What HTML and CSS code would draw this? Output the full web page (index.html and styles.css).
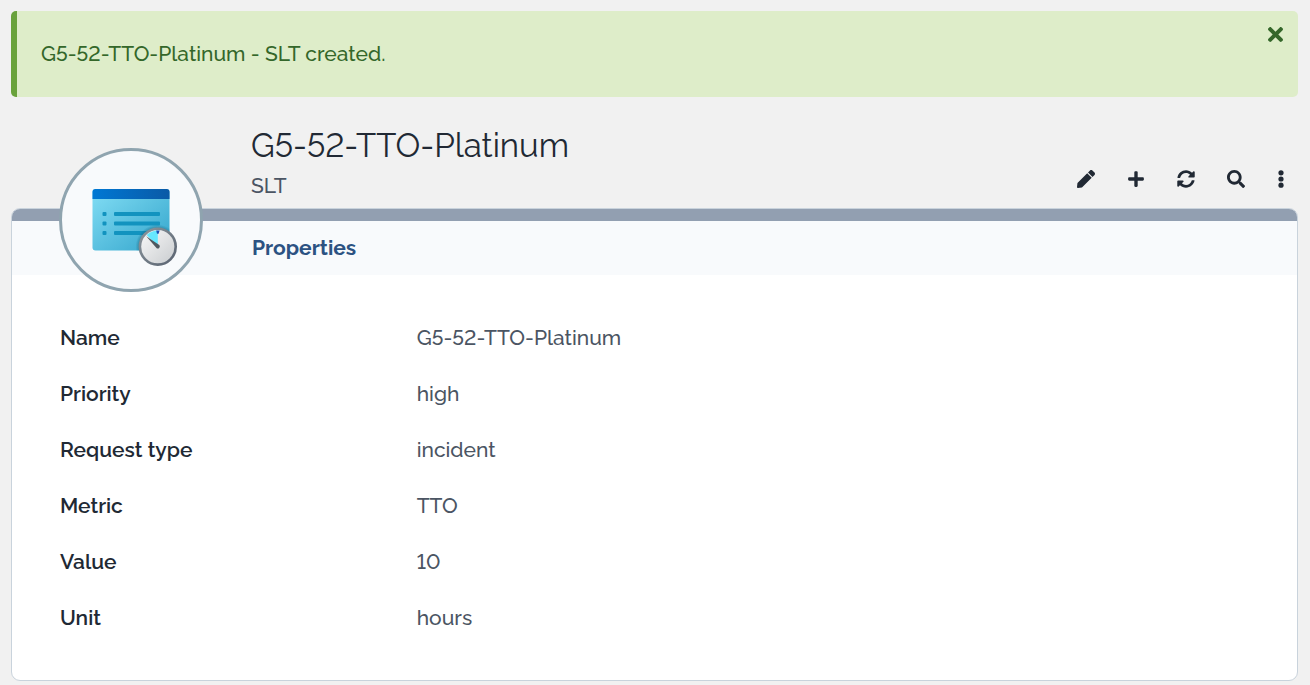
FILE: index.html
```html
<!DOCTYPE html>
<html lang="en">
<head>
<meta charset="utf-8">
<meta name="viewport" content="width=device-width, initial-scale=1">
<title>G5-52-TTO-Platinum</title>
<link rel="stylesheet" href="styles.css">
</head>
<body>
<main class="page">
  <div class="alert" role="status">
    <p class="alert-text">G5-52-TTO-Platinum - SLT created.</p>
    <button class="alert-close" type="button" aria-label="Close">
      <svg class="icon-close" viewBox="0 80 352 352"><path d="M242.72 256l100.07-100.07c12.28-12.28 12.28-32.19 0-44.48l-22.24-22.24c-12.28-12.28-32.19-12.28-44.48 0L176 189.28 75.93 89.21c-12.28-12.28-32.19-12.28-44.48 0L9.21 111.45c-12.28 12.28-12.28 32.19 0 44.48L109.28 256 9.21 356.07c-12.28 12.28-12.28 32.19 0 44.48l22.24 22.24c12.28 12.28 32.2 12.28 44.48 0L176 322.72l100.07 100.07c12.28 12.28 32.2 12.28 44.48 0l22.24-22.24c12.28-12.28 12.28-32.19 0-44.48L242.72 256z"/></svg>
    </button>
  </div>

  <section class="object">
    <header class="object-header">
      <div class="titles">
        <h1 class="title">G5-52-TTO-Platinum</h1>
        <p class="subtitle">SLT</p>
      </div>
      <div class="toolbar">
        <button class="tool" type="button" aria-label="Modify">
          <svg class="icon" viewBox="0 0 512 512"><path d="M290.74 93.24l128.02 128.02-277.99 277.99-114.14 12.6C11.35 513.54-1.56 500.62.14 485.34l12.7-114.22 277.9-277.88zm207.2-19.06l-60.11-60.11c-18.75-18.75-49.16-18.75-67.91 0l-56.55 56.55 128.02 128.02 56.55-56.55c18.75-18.76 18.75-49.16 0-67.91z"/></svg>
        </button>
        <button class="tool" type="button" aria-label="New">
          <svg class="icon" viewBox="-32 0 512 512"><path d="M416 208H272V64c0-17.67-14.33-32-32-32h-32c-17.67 0-32 14.33-32 32v144H32c-17.67 0-32 14.33-32 32v32c0 17.67 14.33 32 32 32h144v144c0 17.67 14.33 32 32 32h32c17.67 0 32-14.33 32-32V304h144c17.67 0 32-14.33 32-32v-32c0-17.67-14.33-32-32-32z"/></svg>
        </button>
        <button class="tool" type="button" aria-label="Refresh">
          <svg class="icon" viewBox="0 0 512 512"><path d="M370.72 133.28C339.458 104.008 298.888 87.962 255.848 88c-77.458.068-144.328 53.178-162.791 126.85-1.344 5.363-6.122 9.15-11.651 9.15H24.103c-7.498 0-13.194-6.807-11.807-14.176C33.933 94.924 134.813 8 256 8c66.448 0 126.791 26.136 171.315 68.685L463.03 40.97C478.149 25.851 504 36.559 504 57.941V192c0 13.255-10.745 24-24 24H345.941c-21.382 0-32.09-25.851-16.971-40.971l41.75-41.749zM32 296h134.059c21.382 0 32.09 25.851 16.971 40.971l-41.75 41.75c31.262 29.273 71.835 45.319 114.876 45.28 77.418-.07 144.315-53.144 162.787-126.849 1.344-5.363 6.122-9.15 11.651-9.15h57.304c7.498 0 13.194 6.807 11.807 14.176C478.067 417.076 377.187 504 256 504c-66.448 0-126.791-26.136-171.315-68.685L48.97 471.03C33.851 486.149 8 475.441 8 454.059V320c0-13.255 10.745-24 24-24z"/></svg>
        </button>
        <button class="tool" type="button" aria-label="Search">
          <svg class="icon" viewBox="0 0 512 512"><path d="M505 442.7L405.3 343c-4.5-4.5-10.6-7-17-7H372c27.6-35.3 44-79.7 44-128C416 93.1 322.9 0 208 0S0 93.1 0 208s93.1 208 208 208c48.3 0 92.7-16.4 128-44v16.3c0 6.4 2.5 12.5 7 17l99.7 99.7c9.4 9.4 24.6 9.4 33.9 0l28.3-28.3c9.4-9.4 9.4-24.6.1-34zM208 336c-70.7 0-128-57.2-128-128 0-70.7 57.2-128 128-128 70.7 0 128 57.2 128 128 0 70.7-57.2 128-128 128z"/></svg>
        </button>
        <button class="tool tool-menu" type="button" aria-label="Other actions">
          <svg class="icon" viewBox="0 0 18 18"><circle cx="9" cy="2.8" r="2.6"/><circle cx="9" cy="9" r="2.6"/><circle cx="9" cy="15.2" r="2.6"/></svg>
        </button>
      </div>
    </header>

    <div class="panel">
      <div class="medallion">
        <svg class="picture" viewBox="-8 -14 94 92">
          <defs>
            <linearGradient id="bar" x1="0" x2="1" y1="0" y2="0"><stop offset="0" stop-color="#0078d4"/><stop offset="1" stop-color="#0a5aa6"/></linearGradient>
            <linearGradient id="sheet" x1="0" x2="1" y1="0" y2="1"><stop offset="0" stop-color="#83def5"/><stop offset="1" stop-color="#32a4cb"/></linearGradient>
            <linearGradient id="dial" x1="0" x2="1" y1="0" y2="1"><stop offset="0" stop-color="#fafafa"/><stop offset="1" stop-color="#c8cbce"/></linearGradient>
            <linearGradient id="rim" x1="0" x2="1" y1="0" y2="1"><stop offset="0" stop-color="#8b969d"/><stop offset="1" stop-color="#596270"/></linearGradient>
            <radialGradient id="shade"><stop offset=".84" stop-color="#17647f" stop-opacity=".45"/><stop offset="1" stop-color="#17647f" stop-opacity="0"/></radialGradient>
            <clipPath id="page-clip"><rect x="0.500" y="1" width="77" height="61.500" rx="3"/></clipPath>
          </defs>
          <g clip-path="url(#page-clip)">
            <path fill="url(#sheet)" d="M0 1h78v62H0z"/>
            <path fill="url(#bar)" d="M0 1h78v10H0z"/>
            <g fill="#1293bf">
              <rect x="10.500" y="24" width="4" height="4" rx="1"/><rect x="22" y="24" width="46" height="4" rx="1"/>
              <rect x="10.500" y="33.500" width="4" height="4" rx="1"/><rect x="22" y="33.500" width="46" height="4" rx="1"/>
              <rect x="10.500" y="43" width="4" height="4" rx="1"/><rect x="22" y="43" width="46" height="4" rx="1"/>
            </g>
            <circle cx="65.500" cy="58.500" r="22" fill="url(#shade)"/>
          </g>
          <circle cx="65.800" cy="58.700" r="17.900" fill="url(#dial)" stroke="url(#rim)" stroke-width="2.600"/>
          <path fill="#66e8ff" d="M65.800 58.700V42.500a16.200 16.200 0 0 0-11.100 4.500z"/>
          <path fill="#1b4fb5" d="M64.200 42.400h3.400l-1 3.400h-1.600z"/>
          <path fill="#50585f" d="M54.200 48.300l13.100 8.800a2.100 2.100 0 0 1-2.600 3.200z"/>
        </svg>
      </div>
      <nav class="tabs">
        <a class="tab" href="#properties">Properties</a>
      </nav>
      <dl class="fields" id="properties">
        <div class="field"><dt class="label">Name</dt><dd class="value">G5-52-TTO-Platinum</dd></div>
        <div class="field"><dt class="label">Priority</dt><dd class="value">high</dd></div>
        <div class="field"><dt class="label">Request type</dt><dd class="value">incident</dd></div>
        <div class="field"><dt class="label">Metric</dt><dd class="value">TTO</dd></div>
        <div class="field"><dt class="label">Value</dt><dd class="value">10</dd></div>
        <div class="field"><dt class="label">Unit</dt><dd class="value">hours</dd></div>
      </dl>
    </div>
  </section>
</main>
</body>
</html>
```

FILE: styles.css
```css
* {
  box-sizing: border-box;
}

body {
  margin: 0;
  background: #f1f1f1;
  color: #212934;
  font-family: Raleway, Lato, sans-serif;
  font-size: 21px;
  font-weight: 500;
  font-variant-numeric: lining-nums;
  line-height: 24px;
}

h1, p, dl, dd {
  margin: 0;
}

button {
  padding: 0;
  border: 0;
  background: none;
  color: inherit;
  cursor: pointer;
}

svg {
  display: block;
  fill: currentColor;
}

.page {
  padding: 11px 12px 4px 11px;
}

.alert {
  display: flex;
  justify-content: space-between;
  align-items: flex-start;
  padding: 12px 12px 12px 24px;
  border-left: 6px solid #69a23b;
  border-radius: 5px;
  background: #deedc9;
  color: #34672a;
}

.alert-text {
  padding: 19px 0;
}

.alert-close {
  padding: 4px 3px;
}

.icon-close {
  width: 15px;
  height: 15px;
}

.object-header {
  display: flex;
  justify-content: space-between;
  align-items: flex-end;
  padding: 28px 0 10px 240px;
}

.title {
  font-size: 33px;
  line-height: 41px;
  font-weight: 400;
}

.subtitle {
  padding-top: 8px;
  color: #4b5563;
}

.toolbar {
  display: flex;
  gap: 6px;
  padding-bottom: 2px;
}

.tool {
  display: flex;
  justify-content: center;
  align-items: center;
  width: 44px;
  height: 34px;
}

.tool-menu {
  width: 34px;
}

.icon {
  width: 18px;
  height: 18px;
}

.panel {
  position: relative;
  border: 1px solid #c9d3dc;
  border-radius: 9px;
  background: #fff;
}

.medallion {
  position: absolute;
  top: -61px;
  left: 47px;
  display: flex;
  justify-content: center;
  align-items: center;
  width: 144px;
  height: 144px;
  border: 3px solid #8fa4af;
  border-radius: 50%;
  background: #f8fafc;
}

.picture {
  width: 94px;
  height: 92px;
}

.tabs {
  padding: 15px 240px;
  border-top: 12px solid #929fb1;
  border-radius: 8px 8px 0 0;
  background: #f8fafc;
}

.tab {
  color: #2c5282;
  font-weight: 700;
  text-decoration: none;
}

.fields {
  display: grid;
  gap: 32px;
  padding: 51px 48px 50px;
}

.field {
  display: grid;
  grid-template-columns: 3fr 7fr;
}

.label {
  font-weight: 600;
}

.value {
  color: #4b5563;
}
```
